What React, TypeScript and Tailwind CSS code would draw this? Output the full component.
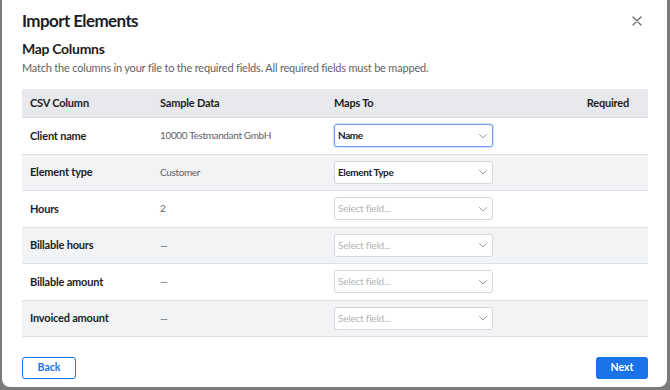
import React from "react";

const rows = [
  { label: "Client name", sample: "10000 Testmandant GmbH", value: "Name", focused: true },
  { label: "Element type", sample: "Customer", value: "Element Type" },
  { label: "Hours", sample: "2", value: "" },
  { label: "Billable hours", sample: "—", value: "" },
  { label: "Billable amount", sample: "—", value: "" },
  { label: "Invoiced amount", sample: "—", value: "" },
];

function Chevron() {
  return (
    <svg width="10" height="10" viewBox="0 0 10 10" fill="none" className="shrink-0">
      <path d="M1.5 3.5 L5 7 L8.5 3.5" stroke="#9aa0a6" strokeWidth="1" strokeLinecap="round" strokeLinejoin="round" />
    </svg>
  );
}

export default function App() {
  return (
    <div
      className="w-[670px] h-[390px] overflow-hidden bg-[#7b7b7b]"
      style={{ fontFamily: "Lato, 'Noto Sans', sans-serif" }}
    >
      <div className="ml-[2px] mt-[-8px] w-[665px] h-[395px] bg-white rounded-lg pt-[17px] pl-[20px] pr-[19px] flex flex-col text-[#1d1d1f]">
        <div className="flex items-center justify-between h-[24px]">
          <h1 className="text-[17px] font-bold tracking-[-0.6px]">Import Elements</h1>
          <svg width="10" height="10" viewBox="0 0 10 10" className="mr-[6px]">
            <path d="M1 1 L9 9 M9 1 L1 9" stroke="#666" strokeWidth="1.2" strokeLinecap="round" />
          </svg>
        </div>
        <h2 className="mt-[6px] text-[14px] font-bold leading-[20px] tracking-[-0.3px]">Map Columns</h2>
        <p className="mt-[1px] text-[11px] leading-[16px] tracking-[-0.2px] text-[#5f6368]">
          Match the columns in your file to the required fields. All required fields must be mapped.
        </p>
        <div className="mt-[13px] w-[626px]">
          <div className="flex items-center h-[29px] bg-[#e7e9ec] border-b border-[#d8dbdf] text-[11px] font-bold tracking-[-0.2px]">
            <div className="w-[138px] pl-[8px]">CSV Column</div>
            <div className="w-[174px]">Sample Data</div>
            <div className="flex-1">Maps To</div>
            <div className="pr-[19px]">Required</div>
          </div>
          {rows.map((r, i) => (
            <div
              key={r.label}
              className={`flex items-center h-[36.5px] border-b border-[#dde0e4] ${i % 2 === 1 ? "bg-[#f1f3f5]" : "bg-white"}`}
            >
              <div className="w-[138px] pl-[8px] text-[11px] font-bold tracking-[-0.2px]">{r.label}</div>
              <div className="w-[174px] text-[10px] tracking-[-0.35px] text-[#5f6368]">{r.sample}</div>
              <div className="flex-1">
                <div
                  className={`w-[159px] h-[23px] rounded-[3px] bg-white flex items-center justify-between pl-[3px] pr-[4px] border ${r.focused ? "border-[#6ea0ec] shadow-[0_0_0_1px_#d6e4fb]" : "border-[#d5d8dc]"}`}
                >
                  <span className={`text-[10px] ${r.value ? "font-bold text-[#222] tracking-[-0.4px]" : "text-[#b0b4b9] tracking-[-0.2px]"}`}>
                    {r.value || "Select field..."}
                  </span>
                  <Chevron />
                </div>
              </div>
            </div>
          ))}
        </div>
        <div className="mt-[20px] flex items-center justify-between w-[626px]">
          <button className="w-[54px] h-[22px] rounded-[3px] border border-[#1a73e8] text-[#1a73e8] text-[10.5px] font-bold bg-white">
            Back
          </button>
          <button className="w-[52px] h-[22px] rounded-[3px] bg-[#1a73e8] text-white text-[10.5px] font-bold">
            Next
          </button>
        </div>
      </div>
    </div>
  );
}
